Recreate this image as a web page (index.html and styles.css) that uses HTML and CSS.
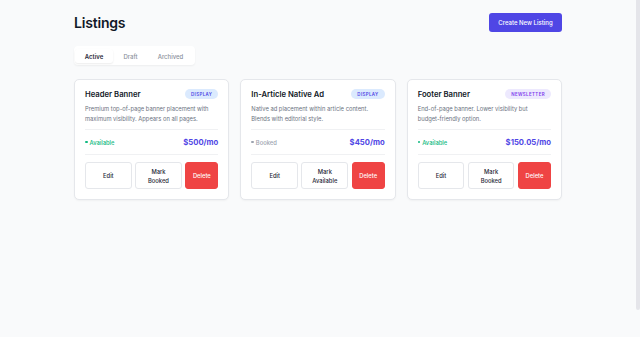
FILE: index.html
```html
<!DOCTYPE html>
<html lang="en">
<head>
<meta charset="utf-8">
<title>Listings</title>
<link rel="stylesheet" href="styles.css">
</head>
<body>
<div class="page">
  <main class="wrap">
    <header class="top">
      <h1 class="title">Listings</h1>
      <button class="primary">Create New Listing</button>
    </header>
    <nav class="tabs">
      <span class="tab active">Active</span>
      <span class="tab">Draft</span>
      <span class="tab">Archived</span>
    </nav>
    <section class="grid">
      <article class="card">
        <div class="card-head">
          <h2 class="card-title">Header Banner</h2>
          <span class="badge display">Display</span>
        </div>
        <p class="desc">Premium top-of-page banner placement with maximum visibility. Appears on all pages.</p>
        <div class="meta">
          <span class="status ok"><i class="dot"></i>Available</span>
          <span class="price">$500/mo</span>
        </div>
        <div class="actions">
          <button class="btn">Edit</button>
          <button class="btn">Mark<br>Booked</button>
          <button class="btn danger">Delete</button>
        </div>
      </article>
      <article class="card">
        <div class="card-head">
          <h2 class="card-title">In-Article Native Ad</h2>
          <span class="badge display">Display</span>
        </div>
        <p class="desc">Native ad placement within article content. Blends with editorial style.</p>
        <div class="meta">
          <span class="status off"><i class="dot"></i>Booked</span>
          <span class="price">$450/mo</span>
        </div>
        <div class="actions">
          <button class="btn">Edit</button>
          <button class="btn">Mark<br>Available</button>
          <button class="btn danger">Delete</button>
        </div>
      </article>
      <article class="card">
        <div class="card-head">
          <h2 class="card-title">Footer Banner</h2>
          <span class="badge news">Newsletter</span>
        </div>
        <p class="desc">End-of-page banner. Lower visibility but budget-friendly option.</p>
        <div class="meta">
          <span class="status ok"><i class="dot"></i>Available</span>
          <span class="price">$150.05/mo</span>
        </div>
        <div class="actions">
          <button class="btn">Edit</button>
          <button class="btn">Mark<br>Booked</button>
          <button class="btn danger">Delete</button>
        </div>
      </article>
    </section>
  </main>
  <div class="scrollbar"></div>
</div>
</body>
</html>
```
FILE: styles.css
```css
* { box-sizing: border-box; }
html, body { margin: 0; padding: 0; }
body {
  background: #f9fafb;
  font-family: Inter, "Noto Sans", sans-serif;
  color: #111827;
  height: 337px;
  overflow: hidden;
}
.page {
  position: relative;
  width: 640px;
  height: 337px;
  padding-right: 4px;
}
.scrollbar {
  position: absolute;
  top: 0;
  right: 0;
  width: 4px;
  height: 310px;
  background: #e5e5ea;
  border-radius: 0 0 2px 2px;
}
.wrap {
  width: 488px;
  margin: 0 auto;
  padding-top: 13px;
}
.top {
  display: flex;
  justify-content: space-between;
  align-items: center;
  height: 19px;
}
.title {
  margin: 0;
  font-size: 14px;
  font-weight: 600;
  letter-spacing: -0.2px;
  color: #111827;
}
.primary {
  width: 73px;
  height: 19px;
  border: 0;
  border-radius: 3px;
  background: #4f46e5;
  color: #fff;
  font-family: inherit;
  font-size: 6px;
  font-weight: 500;
  padding: 0;
}
.tabs {
  display: inline-flex;
  margin-top: 14px;
  padding: 3px 2px 2px 1px;
  background: #fff;
  border-radius: 4px;
  box-shadow: 0 1px 2px rgba(0,0,0,0.05);
  gap: 1px;
  height: 19px;
}
.tab {
  display: flex;
  align-items: center;
  padding: 0 9.5px;
  font-size: 6px;
  font-weight: 500;
  color: #8b919c;
  border-radius: 3px;
}
.tab:first-child { width: 38px; justify-content: center; }
.tab.active {
  color: #1f2937;
  font-weight: 600;
  background: #fff;
  box-shadow: 0 1px 2px rgba(0,0,0,0.08);
}
.grid {
  display: grid;
  grid-template-columns: repeat(3, 1fr);
  gap: 11px;
  margin-top: 14px;
}
.card {
  background: #fff;
  border: 1px solid #e5e7eb;
  border-radius: 5px;
  box-shadow: 0 1px 2px rgba(0,0,0,0.04);
  padding: 8px 10px 10px;
  height: 121px;
}
.card-head {
  display: flex;
  justify-content: space-between;
  align-items: center;
  height: 12px;
}
.card-title {
  margin: 0;
  font-size: 7.7px;
  font-weight: 600;
  color: #111827;
}
.badge {
  display: inline-flex;
  align-items: center;
  height: 10px;
  padding: 0 6px;
  border-radius: 5px;
  font-size: 4.4px;
  font-weight: 600;
  letter-spacing: 0.4px;
  text-transform: uppercase;
}
.badge.display { background: #dbeafe; color: #4f46e5; }
.badge.news { background: #ede9fe; color: #7c3aed; }
.desc {
  margin: 4px 0 0;
  font-size: 5.8px;
  line-height: 9.7px;
  color: #6b7280;
  height: 26px;
  border-bottom: 1px solid #f0f1f3;
}
.meta {
  display: flex;
  justify-content: space-between;
  align-items: center;
  height: 25px;
  border-bottom: 1px solid #f0f1f3;
}
.status {
  display: inline-flex;
  align-items: center;
  gap: 2px;
  font-size: 5.8px;
  font-weight: 500;
}
.dot {
  width: 2.5px;
  height: 2.5px;
  border-radius: 50%;
  background: currentColor;
}
.status.ok { color: #10b981; }
.status.off { color: #9ca3af; }
.price {
  font-size: 7.7px;
  font-weight: 700;
  color: #4f46e5;
}
.actions {
  display: grid;
  grid-template-columns: 1fr 1fr 33px;
  gap: 3.5px;
  margin-top: 7px;
}
.btn {
  height: 27px;
  padding: 0;
  border: 1px solid #e5e7eb;
  border-radius: 3px;
  background: #fff;
  color: #1f2937;
  font-family: inherit;
  font-size: 5.8px;
  font-weight: 500;
  line-height: 9px;
}
.btn.danger {
  background: #ef4444;
  border-color: #ef4444;
  color: #fff;
}
```
